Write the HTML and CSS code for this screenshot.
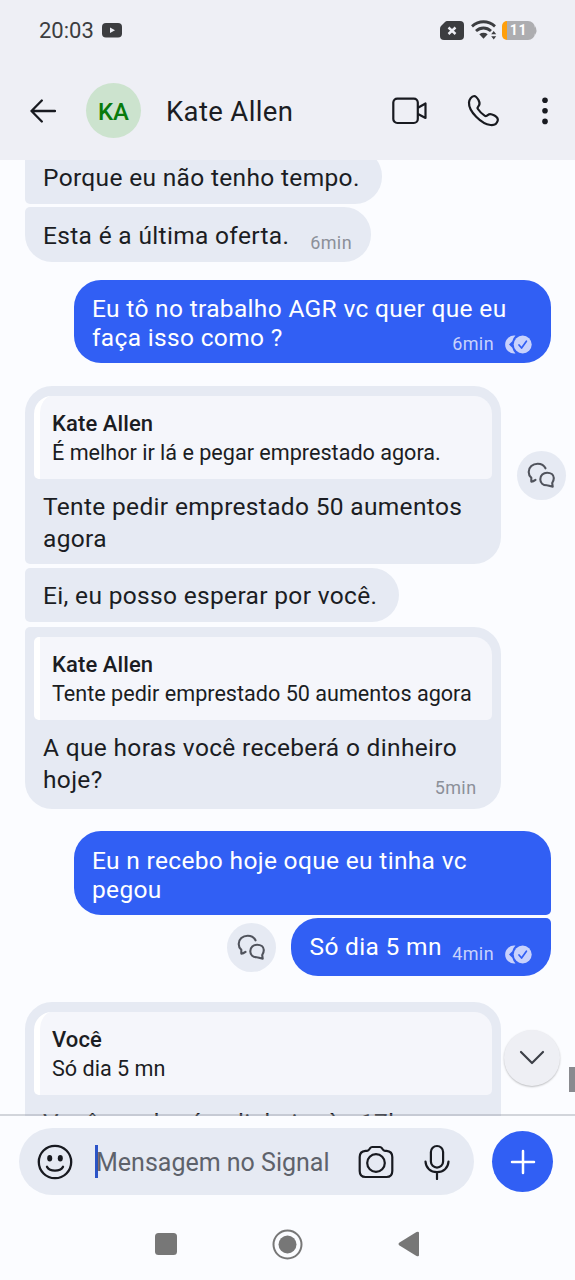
FILE: index.html
```html
<!DOCTYPE html>
<html lang="pt-BR">
<head>
<meta charset="utf-8">
<meta name="viewport" content="width=device-width, initial-scale=1">
<title>Kate Allen</title>
<link rel="stylesheet" href="styles.css">
</head>
<body>
<svg width="0" height="0" class="defs" aria-hidden="true">
  <symbol id="read" viewBox="0 0 28 19">
    <path d="M11.500 .6A9 9 0 1 0 11.500 18.400A11.500 11.500 0 0 1 8.300 12.800L5 9.500L8.300 6.200A11.500 11.500 0 0 1 11.500 .6Z" fill="#c8d2fc"/>
    <circle cx="18.700" cy="9.500" r="9" fill="#c8d2fc"/>
    <path d="M15 10l2.600 3 4.800-6.800" fill="none" stroke="#315ff4" stroke-width="1.700" stroke-linecap="round" stroke-linejoin="round"/>
  </symbol>
  <symbol id="bubbles" viewBox="0 0 49 49">
    <g fill="none" stroke="#50535c" stroke-width="2.100" stroke-linecap="round" stroke-linejoin="round">
      <path d="M28.500 17.300C27 14.100 24 12.700 20.700 12.700C15.600 12.700 11.700 16.300 11.700 20.900C11.700 23.300 12.900 25.400 14.300 26.700L14.300 30.600C16 30.700 17.300 29.800 18.500 28.900"/>
      <path d="M35.200 32C36.300 30.400 36.800 28.700 36.800 27.100C36.800 23.800 33.800 21.700 30.100 21.700C26.300 21.700 23.300 24.400 23.300 28.200C23.300 32 26.200 34.300 29.700 34.300C31.500 34.300 32.500 35.300 35.700 35.600Z"/>
    </g>
  </symbol>
</svg>
<div class="screen">
  <div class="status">
    <span class="time">20:03</span>
    <svg class="tube" width="20" height="15" viewBox="0 0 20 15"><rect width="20" height="14.500" rx="4" fill="#3c3d40"/><path d="M8 4.500L13 7.300L8 10Z" fill="#eeeff5"/></svg>
    <svg class="sim" width="24" height="19" viewBox="0 0 24 19"><path d="M7 0H20a4 4 0 0 1 4 4V15a4 4 0 0 1-4 4H4a4 4 0 0 1-4-4V7.500Q0 6 1 5L5 1Q6 0 7 0Z" fill="#3c3d40"/><path d="M8.500 6.500l7 6.500M15.500 6.500l-7 6.500" stroke="#eeeff5" stroke-width="2.400"/></svg>
    <svg class="wifi" width="26" height="20" viewBox="0 0 26 20"><g fill="none" stroke="#3c3d40" stroke-width="2.900"><path d="M1 6.300C8 .2 17 .2 24 6.300"/><path d="M5 11C9.500 7 15.500 7 20 11"/></g><path d="M8.300 14.200Q12.500 11.400 16.700 14.200L12.500 18.800Z" fill="#3c3d40"/><path d="M20.200 14.200L22.700 11L25.200 14.200ZM20.200 16.200h5L22.700 19.500Z" fill="#3c3d40"/></svg>
    <div class="battery"><span>11</span></div>
    <svg class="nub" width="3" height="9" viewBox="0 0 3 9"><path d="M0 0Q3 4.500 0 9Z" fill="#adadb0"/></svg>
  </div>
  <header class="bar">
    <svg class="back" width="26" height="24" viewBox="0 0 26 24"><path d="M25 12H1.500M11.800 1.500L1.500 12L11.800 22.500" fill="none" stroke="#181a20" stroke-width="2.300" stroke-linecap="round" stroke-linejoin="round"/></svg>
    <div class="avatar">KA</div>
    <h1 class="name">Kate Allen</h1>
    <svg class="video" width="35" height="28" viewBox="0 0 35 28"><g fill="none" stroke="#181a20" stroke-width="2.200" stroke-linejoin="round"><rect x="1.300" y="1.600" width="24.500" height="24.400" rx="4"/><path d="M26 10.700L33.500 6.500V21L26 17"/></g></svg>
    <svg class="phone" width="33" height="33" viewBox="0 0 33 33"><path d="M2 8.500C2.300 5.500 4.500 2.200 7.200 2C9.200 2 10.200 3.700 11.500 6.100C12.700 8.500 13.200 10 11.900 11.600C10.900 12.900 9.900 13.500 10.900 15C12.700 17.700 15 20 17.900 21.900C19.400 22.700 20.200 21.700 21.600 20.500C23.300 19.300 24.700 20 27.500 21.500C30.400 23.100 31.400 24.300 30.700 26.700C29.700 29.900 26.700 31.400 23.500 31C14.500 30 1.500 17.500 2 8.500Z" fill="none" stroke="#181a20" stroke-width="2.200" stroke-linejoin="round"/></svg>
    <svg class="more" width="6" height="28" viewBox="0 0 6 28"><g fill="#181a20"><circle cx="3" cy="3.300" r="2.800"/><circle cx="3" cy="13.800" r="2.800"/><circle cx="3" cy="24.400" r="2.800"/></g></svg>
  </header>

  <main class="chat">
    <div class="row first"><div class="bubble in mid"><p class="text">Porque eu não tenho tempo.</p></div></div>
    <div class="row"><div class="bubble in end offer"><p class="text">Esta é a última oferta.</p><span class="meta">6min</span></div></div>

    <div class="row mine group"><div class="bubble out wide"><p class="text">Eu tô no trabalho AGR vc quer que eu<br>faça isso como ?</p><span class="meta">6min <svg width="28" height="19"><use href="#read"/></svg></span></div></div>

    <div class="row group">
      <div class="bubble in start quoted">
        <div class="quote"><strong>Kate Allen</strong><span>É melhor ir lá e pegar emprestado agora.</span></div>
        <p class="text">Tente pedir emprestado 50 aumentos<br>agora</p>
      </div>
      <div class="share"><svg width="49" height="49"><use href="#bubbles"/></svg></div>
    </div>
    <div class="row"><div class="bubble in mid wait"><p class="text">Ei, eu posso esperar por você.</p></div></div>
    <div class="row near"><div class="bubble in end quoted tall">
        <div class="quote square"><strong>Kate Allen</strong><span>Tente pedir emprestado 50 aumentos agora</span></div>
        <p class="text">A que horas você receberá o dinheiro<br>hoje?</p><span class="meta">5min</span>
    </div></div>

    <div class="row mine group"><div class="bubble out wide start"><p class="text">Eu n recebo hoje oque eu tinha vc<br>pegou</p></div></div>
    <div class="row mine">
      <div class="share"><svg width="49" height="49"><use href="#bubbles"/></svg></div>
      <div class="bubble out end short"><p class="text">Só dia 5 mn</p><span class="meta">4min <svg width="28" height="19"><use href="#read"/></svg></span></div>
    </div>

    <div class="row group last">
      <div class="bubble in start quoted">
        <div class="quote"><strong>Você</strong><span>Só dia 5 mn</span></div>
        <p class="text">Você receberá o dinheiro às 17h</p>
      </div>
    </div>
    <div class="down"><svg width="26" height="16" viewBox="0 0 26 16"><path d="M2 2L13 13L24 2" fill="none" stroke="#3d4048" stroke-width="2.200" stroke-linecap="round" stroke-linejoin="round"/></svg></div>
    <div class="thumb"></div>
  </main>

  <div class="composer">
    <div class="field">
      <svg class="smile" width="36" height="36" viewBox="0 0 36 36"><g fill="none" stroke="#181a20" stroke-width="2.300" stroke-linecap="round"><circle cx="18" cy="18" r="16.200"/><path d="M10 22.800C13 27.800 23 27.800 26 22.800"/></g><ellipse cx="12.700" cy="14.300" rx="2.500" ry="3.200" fill="#181a20"/><ellipse cx="23.300" cy="14.300" rx="2.500" ry="3.200" fill="#181a20"/></svg>
      <span class="caret"></span>
      <span class="hint">Mensagem no Signal</span>
      <svg class="camera" width="36" height="34" viewBox="0 0 36 34"><g fill="none" stroke="#181a20" stroke-width="2.200" stroke-linejoin="round"><path d="M7.500 5.800H9Q10.500 5.700 11.300 4.300Q12.500 2 14 2H22Q23.500 2 24.700 4.300Q25.500 5.700 27 5.800H28.500Q34.300 6.300 34.300 12V26Q34.300 32 28.500 32H7.500Q1.700 32 1.700 26V12Q1.700 6.300 7.500 5.800Z"/><circle cx="18" cy="18" r="8.800"/></g></svg>
      <svg class="mic" width="26" height="36" viewBox="0 0 26 36"><g fill="none" stroke="#181a20" stroke-width="2.200"><rect x="6.900" y="2" width="12.200" height="21.600" rx="6.100"/><path d="M1.500 17.500C1.800 24 6.500 28.200 13 28.200S24.200 24 24.500 17.500M13 28.200V35" stroke-linecap="round"/></g></svg>
    </div>
    <div class="plus"><svg width="26" height="26" viewBox="0 0 26 26"><path d="M13 2V24M2 13H24" stroke="#fff" stroke-width="2.500" stroke-linecap="round"/></svg></div>
  </div>

  <nav class="nav">
    <svg width="22" height="22" viewBox="0 0 22 22"><rect width="22" height="22" rx="3.500" fill="#777"/></svg>
    <svg width="31" height="31" viewBox="0 0 31 31"><circle cx="15.500" cy="15.500" r="14" fill="none" stroke="#777" stroke-width="2"/><circle cx="15.500" cy="15.500" r="9" fill="#777"/></svg>
    <svg width="22" height="26" viewBox="0 0 22 26"><path d="M1.500 11.500L18.500 1Q21 0 21 2V24Q21 26 18.500 25L1.500 14.500Q-.5 13 1.500 11.500Z" fill="#777"/></svg>
  </nav>
</div>
</body>
</html>
```
FILE: styles.css
```css
* { box-sizing: border-box; }
body { margin: 0; background: #fbfcff; font-family: Roboto, "Liberation Sans", sans-serif; color: #1b1d23; }
p, h1 { margin: 0; font-weight: 400; }
svg { display: block; flex: none; }
.defs { position: absolute; }
.screen { width: 575px; height: 1280px; display: flex; flex-direction: column; overflow: hidden; }

.status { height: 60px; padding: 0 38px 0 39px; display: flex; align-items: center; background: #eeeff5; flex: none; }
.time { font-size: 22px; width: 63px; color: #3c3d40; line-height: 26px; padding-top: 2px; }
.sim { margin-left: auto; }
.wifi { margin: 0 5px 0 7px; }
.battery { width: 33px; height: 19px; border-radius: 5px 7px 7px 5px; background: linear-gradient(90deg, #ff9f0a 5px, #adadb0 5px); color: #fff; font-size: 14px; font-weight: 700; line-height: 19px; text-align: center; letter-spacing: .8px; }
.nub { margin-right: -1px; }

.bar { height: 100px; padding: 0 27px 0 30px; display: flex; align-items: center; background: #eeeff5; flex: none; }
.avatar { width: 55px; height: 55px; margin-left: 30px; border-radius: 50%; background: #cce3ce; color: #087a0b; font-size: 24px; font-weight: 500; line-height: 58px; text-align: center; }
.name { margin-left: 25px; font-size: 27.500px; line-height: 36px; padding-top: 4px; letter-spacing: .35px; }
.bar svg { position: relative; top: .5px; }
.video { margin-left: auto; }
.phone { margin-left: 40px; }
.more { margin-left: 42px; }

.chat { height: 956px; position: relative; padding: 0 24.500px; overflow: hidden; flex: none; }
.chat::after { content: ""; position: absolute; left: 0; right: 0; bottom: 0; height: 2px; background: rgba(150, 155, 165, .4); }
.row { display: flex; align-items: center; gap: 16px; margin-top: 3.500px; }
.row.first { margin-top: -11px; }
.row.near { margin-top: 5px; }
.row.mine { justify-content: flex-end; gap: 15px; }
.row.group { margin-top: 23px; }
.row.group.mine { margin-top: 18px; }
.row.near + .group.mine { margin-top: 22px; }
.row.group.last { margin-top: 26px; }

.bubble { display: grid; padding: 12.500px 18.500px 10px; border-radius: 27px; flex: none; }
.in { background: #e6eaf3; }
.out { background: #315ff4; color: #fff; }
.in.start { border-bottom-left-radius: 5px; }
.in.end { border-top-left-radius: 5px; }
.in.mid { border-top-left-radius: 5px; border-bottom-left-radius: 5px; }
.out.start { border-bottom-right-radius: 5px; }
.out.end { border-top-right-radius: 5px; }
.text { grid-area: 1 / 1; font-size: 24.500px; line-height: 32px; letter-spacing: .33px; white-space: nowrap; }
.out .text { line-height: 29px; }
.meta { grid-area: 1 / 1; align-self: end; justify-self: end; display: flex; gap: 10px; align-items: center; font-size: 18px; line-height: 20px; letter-spacing: .4px; color: #8c9099; position: relative; top: 1px; }
.out .meta { color: #c8d2fc; }
.offer { width: 346px; }
.first .bubble { width: 357.500px; }
.wait { width: 374px; }
.wide { width: 477px; height: 83.500px; padding-top: 14.500px; }
.short { width: 259.500px; height: 58px; padding-top: 13.500px; }
.short .meta { top: -2px; }

.quoted { width: 476.500px; height: 178px; padding: 9.500px 9.500px 0; align-content: start; }
.quoted .text { grid-area: 2 / 1; padding: 12px 9px 0; }
.quoted .meta { grid-area: 2 / 1; padding: 0 15px 0 0; top: 2px; }
.quoted.tall { height: 182px; }
.quote { height: 83.500px; padding: 13px 14px 0 12px; border-left: 6px solid #fff; border-radius: 18px 18px 5px 5px; background: #f5f6fb; display: flex; flex-direction: column; font-size: 21.600px; line-height: 29.500px; white-space: nowrap; }
.quote.square { border-top-left-radius: 5px; }
.quote strong { font-weight: 500; font-size: 22px; letter-spacing: .1px; }

.share { width: 49px; height: 49px; border-radius: 50%; background: #e6eaf3; flex: none; }
.down { position: absolute; left: 504px; top: 870px; width: 56px; height: 56px; border-radius: 50%; background: #eeeff4; box-shadow: 0 1px 2px rgba(0, 0, 0, .25); display: grid; place-items: center; }
.thumb { position: absolute; right: 0; top: 907px; width: 6px; height: 25px; background: #898a8f; }

.composer { height: 92px; padding: 12px 21.500px 0 18.500px; display: flex; align-items: flex-start; flex: none; }
.field { width: 455.500px; height: 67px; border-radius: 34px; padding-left: 18.500px; display: flex; align-items: center; background: #e6eaf3; }
.caret { width: 3px; height: 33px; background: #2c54c8; margin-left: 22px; }
.hint { font-size: 25px; line-height: 32px; color: #5e626b; margin: 2px 0 0 -2px; width: 262px; white-space: nowrap; }
.mic { margin-left: 30px; }
.plus { width: 61px; height: 61px; margin: 3px 0 0 18px; border-radius: 50%; background: #315ff4; display: grid; place-items: center; }

.nav { height: 72px; padding: 0 155px; display: flex; justify-content: space-between; align-items: center; flex: none; }
```
